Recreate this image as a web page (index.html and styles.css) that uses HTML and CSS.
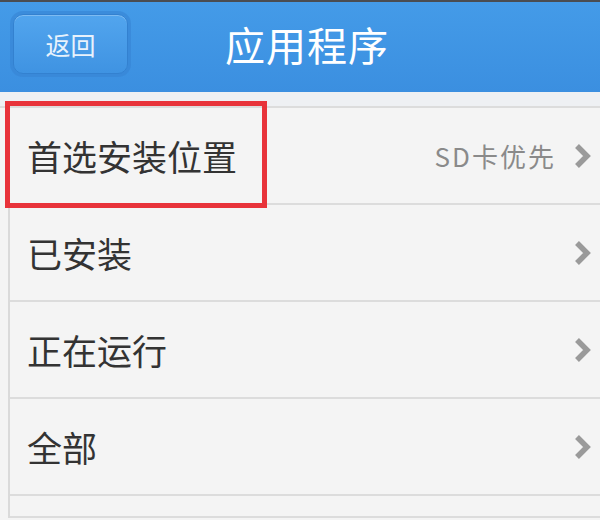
FILE: index.html
```html
<!DOCTYPE html>
<html lang="zh-CN">
<head>
    <meta charset="UTF-8">
    <title>应用程序</title>
    <link rel="stylesheet" href="styles.css">
</head>
<body>
    <div class="header">
        <div class="back-btn">返回</div>
        <div class="title">应用程序</div>
    </div>
    <div class="strip"></div>
    <div class="list">
        <div class="row">
            <div class="label highlighted">首选安装位置</div>
            <div class="value">SD卡优先</div>
            <svg class="chevron" viewBox="0 0 20 26"><path d="M5 3 L15 13 L5 23" fill="none" stroke="#9a9a9a" stroke-width="5.5"/></svg>
        </div>
        <div class="row">
            <div class="label">已安装</div>
            <svg class="chevron" viewBox="0 0 20 26"><path d="M5 3 L15 13 L5 23" fill="none" stroke="#9a9a9a" stroke-width="5.5"/></svg>
        </div>
        <div class="row">
            <div class="label">正在运行</div>
            <svg class="chevron" viewBox="0 0 20 26"><path d="M5 3 L15 13 L5 23" fill="none" stroke="#9a9a9a" stroke-width="5.5"/></svg>
        </div>
        <div class="row">
            <div class="label">全部</div>
            <svg class="chevron" viewBox="0 0 20 26"><path d="M5 3 L15 13 L5 23" fill="none" stroke="#9a9a9a" stroke-width="5.5"/></svg>
        </div>
        <div class="row last"></div>
    </div>
</body>
</html>
```

FILE: styles.css
```css
body {
    margin: 0;
    width: 600px;
    height: 520px;
    overflow: hidden;
    background: #f4f4f4;
    font-family: "Noto Sans CJK SC", "Noto Sans", sans-serif;
}
.header {
    height: 90px;
    border-top: 2px solid #4a4d52;
    background: linear-gradient(to bottom, #449be8 0%, #3b8fe0 100%);
    display: flex;
    align-items: center;
}
.back-btn {
    margin-left: 13px;
    margin-top: -6px;
    width: 115px;
    height: 60px;
    box-sizing: border-box;
    border: 1px solid #3381d0;
    border-radius: 10px;
    background: linear-gradient(to bottom, #52a5ee 0%, #3f93e2 100%);
    box-shadow: 0 0 0 3px rgba(55, 132, 212, 0.6), inset 0 1px 0 rgba(255, 255, 255, 0.25);
    color: #e8f2fc;
    font-size: 25px;
    display: flex;
    align-items: center;
    justify-content: center;
}
.title {
    color: #fff;
    font-size: 40px;
    margin-left: 97px;
    margin-top: -6px;
    letter-spacing: 1px;
}
.strip {
    height: 14px;
    background: #eef0f3;
    border-bottom: 2px solid #dcdcdc;
}
.list {
    margin-left: 8px;
    border-left: 2px solid #dadada;
}
.row {
    height: 95px;
    border-bottom: 2px solid #dcdcdc;
    display: flex;
    align-items: center;
    padding: 0 8px 0 17px;
}
.row.last {
    height: 20px;
}
.label {
    flex: 1;
    font-size: 35px;
    color: #333;
}
.label.highlighted {
    position: relative;
}
/* red annotation frame drawn over the first row */
.label.highlighted::after {
    content: "";
    position: absolute;
    left: -22px;
    top: -29px;
    width: 252px;
    height: 97px;
    border: 5px solid #e8333a;
}
.value {
    font-size: 26px;
    color: #8a8a8a;
    margin-right: 16px;
    letter-spacing: 2px;
}
.chevron {
    width: 20px;
    height: 26px;
}
```
